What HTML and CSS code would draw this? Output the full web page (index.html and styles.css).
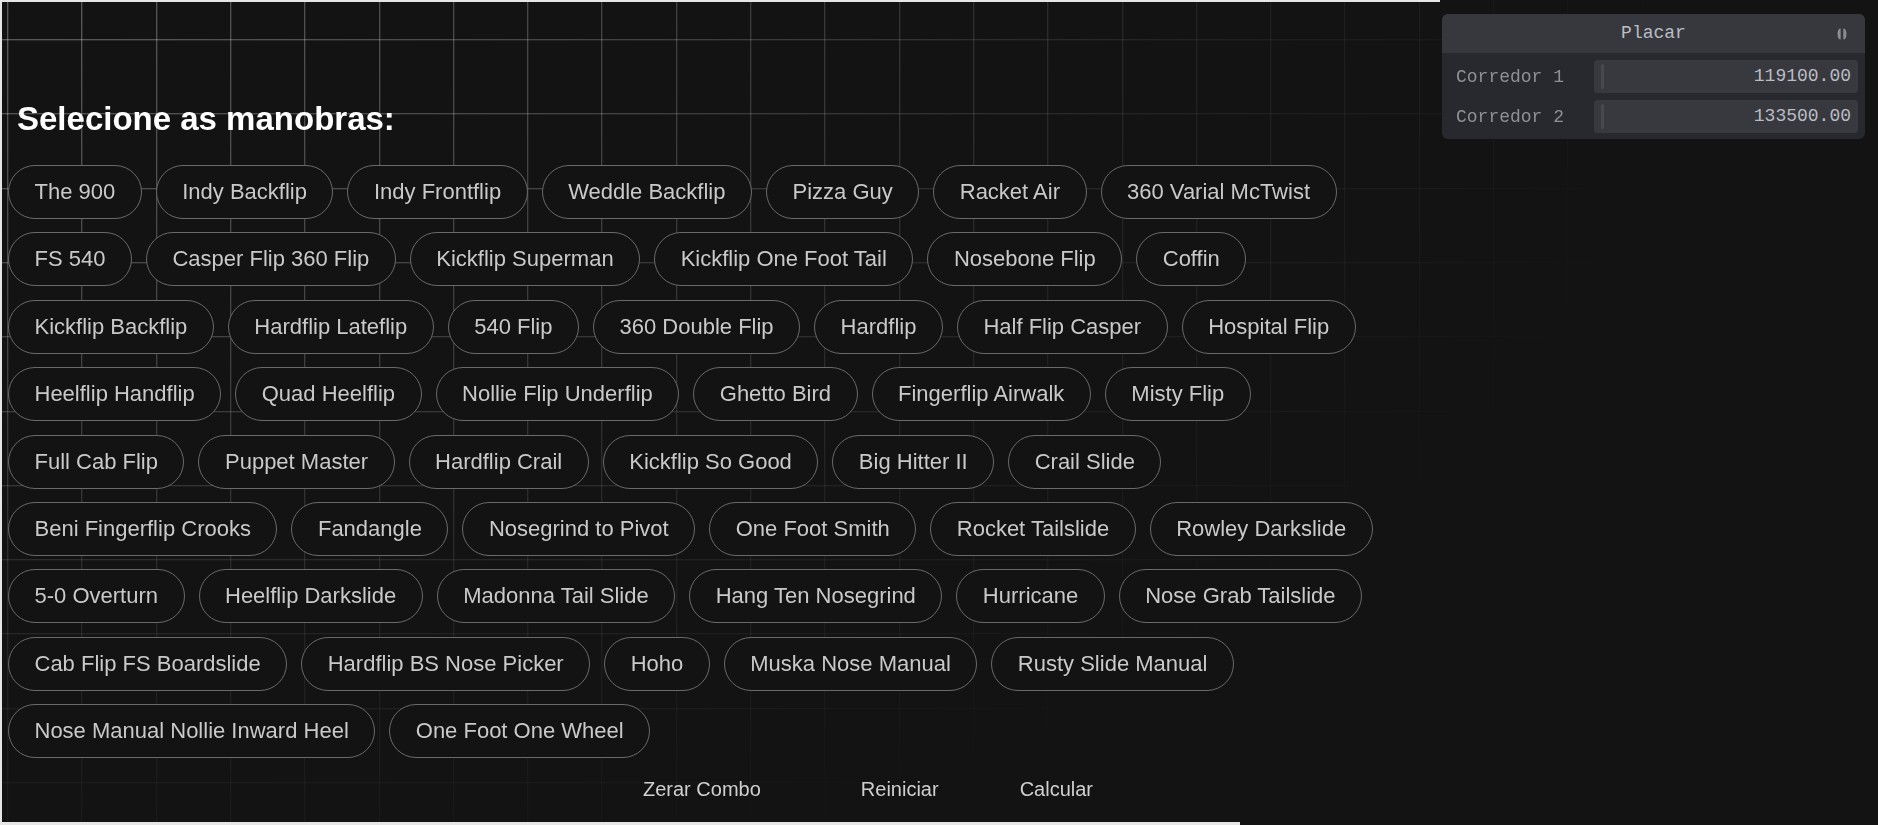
FILE: index.html
```html
<!DOCTYPE html>
<html lang="pt">
<head>
  <meta charset="UTF-8">
  <title>Manobras</title>
  <link rel="stylesheet" href="styles.css">
</head>
<body>
  <main class="stage">
    <h2 class="title">Selecione as manobras:</h2>

    <div class="tricks">
      <button class="trick">The 900</button>
      <button class="trick">Indy Backflip</button>
      <button class="trick">Indy Frontflip</button>
      <button class="trick">Weddle Backflip</button>
      <button class="trick">Pizza Guy</button>
      <button class="trick">Racket Air</button>
      <button class="trick">360 Varial McTwist</button>
      <button class="trick">FS 540</button>
      <button class="trick">Casper Flip 360 Flip</button>
      <button class="trick">Kickflip Superman</button>
      <button class="trick">Kickflip One Foot Tail</button>
      <button class="trick">Nosebone Flip</button>
      <button class="trick">Coffin</button>
      <button class="trick">Kickflip Backflip</button>
      <button class="trick">Hardflip Lateflip</button>
      <button class="trick">540 Flip</button>
      <button class="trick">360 Double Flip</button>
      <button class="trick">Hardflip</button>
      <button class="trick">Half Flip Casper</button>
      <button class="trick">Hospital Flip</button>
      <button class="trick">Heelflip Handflip</button>
      <button class="trick">Quad Heelflip</button>
      <button class="trick">Nollie Flip Underflip</button>
      <button class="trick">Ghetto Bird</button>
      <button class="trick">Fingerflip Airwalk</button>
      <button class="trick">Misty Flip</button>
      <button class="trick">Full Cab Flip</button>
      <button class="trick">Puppet Master</button>
      <button class="trick">Hardflip Crail</button>
      <button class="trick">Kickflip So Good</button>
      <button class="trick">Big Hitter II</button>
      <button class="trick">Crail Slide</button>
      <button class="trick">Beni Fingerflip Crooks</button>
      <button class="trick">Fandangle</button>
      <button class="trick">Nosegrind to Pivot</button>
      <button class="trick">One Foot Smith</button>
      <button class="trick">Rocket Tailslide</button>
      <button class="trick">Rowley Darkslide</button>
      <button class="trick">5-0 Overturn</button>
      <button class="trick">Heelflip Darkslide</button>
      <button class="trick">Madonna Tail Slide</button>
      <button class="trick">Hang Ten Nosegrind</button>
      <button class="trick">Hurricane</button>
      <button class="trick">Nose Grab Tailslide</button>
      <button class="trick">Cab Flip FS Boardslide</button>
      <button class="trick">Hardflip BS Nose Picker</button>
      <button class="trick">Hoho</button>
      <button class="trick">Muska Nose Manual</button>
      <button class="trick">Rusty Slide Manual</button>
      <button class="trick">Nose Manual Nollie Inward Heel</button>
      <button class="trick">One Foot One Wheel</button>
    </div>

    <div class="actions">
      <button class="action action-reset">Zerar Combo</button>
      <button class="action">Reiniciar</button>
      <button class="action">Calcular</button>
    </div>
  </main>

  <!-- painel do placar -->
  <div class="pane">
    <div class="pane-title">
      Placar
      <svg class="pane-mark" width="10" height="12" viewBox="0 0 10 12">
        <path d="M3.6 0.5 C1.4 0.5 0.6 3 0.6 6 C0.6 9 1.4 11.5 3.6 11.5 Z" fill="#8d8e93"/>
        <path d="M6.4 0.5 C8.6 0.5 9.4 3 9.4 6 C9.4 9 8.6 11.5 6.4 11.5 Z" fill="#8d8e93"/>
      </svg>
    </div>
    <div class="pane-body">
      <div class="pane-row">
        <span class="pane-label">Corredor 1</span>
        <span class="pane-value">119100.00</span>
      </div>
      <div class="pane-row">
        <span class="pane-label">Corredor 2</span>
        <span class="pane-value">133500.00</span>
      </div>
    </div>
  </div>
</body>
</html>
```

FILE: styles.css
```css
html, body {
  height: 100%;
}

body {
  margin: 0;
  background: #131313;
  color: #c9c9c9;
  font-family: 'Liberation Sans', Arial, sans-serif;
  font-size: 22px;
  overflow: hidden;
}

/* grade de fundo, some aos poucos */
body::before {
  content: '';
  position: fixed;
  inset: 0;
  z-index: -1;
  background-image:
    repeating-linear-gradient(to right, transparent -65.3px 7px, rgba(255,255,255,.30) 7px 8px, rgba(255,255,255,.10) 8px 9px),
    repeating-linear-gradient(to bottom, transparent -33.3px 39px, rgba(255,255,255,.30) 39px 40px, rgba(255,255,255,.10) 40px 41px);
  -webkit-mask-image: radial-gradient(ellipse 1700px 960px at 0 0, #000 0%, rgba(0,0,0,.7) 35%, rgba(0,0,0,.22) 70%, transparent 100%);
  mask-image: radial-gradient(ellipse 1700px 960px at 0 0, #000 0%, rgba(0,0,0,.7) 35%, rgba(0,0,0,.22) 70%, transparent 100%);
}

/* moldura clara nas bordas */
body::after {
  content: '';
  position: fixed;
  inset: 0;
  pointer-events: none;
  background:
    linear-gradient(#e6e6e6, #e6e6e6) 0 0 / 1440px 2px no-repeat,
    linear-gradient(#e6e6e6, #e6e6e6) 0 0 / 2px 100% no-repeat,
    linear-gradient(#e6e6e6, #e6e6e6) 0 100% / 1240px 3px no-repeat;
}

.stage {
  padding: 0 8px;
}

.title {
  margin: 0 0 27px;
  padding: 100px 0 0 9px;
  font-size: 33px;
  line-height: 38px;
  font-weight: bold;
  color: #fff;
}

.tricks {
  display: flex;
  flex-wrap: wrap;
  gap: 13.4px 14px;
  width: 1410px;
}

.trick {
  padding: 14px 25.5px;
  line-height: 24px;
  font-family: inherit;
  font-size: 22px;
  color: #c9c9c9;
  background: #131313;
  border: 1px solid #6a6a6a;
  border-radius: 30px;
}

.actions {
  display: flex;
  justify-content: center;
  gap: 41px;
  margin-top: 10px;
  padding-right: 142px;
}

.action {
  padding: 10px 20px;
  font-family: inherit;
  font-size: 20px;
  line-height: 23px;
  color: #cfcfcf;
  background: none;
  border: 0;
}

.action-reset {
  margin-right: 19px;
}

/* placar no canto */
.pane {
  position: absolute;
  top: 14px;
  right: 13px;
  width: 423px;
  background: #28292e;
  border-radius: 6px;
  font-family: 'Liberation Mono', 'Courier New', monospace;
  font-size: 18px;
  overflow: hidden;
}

.pane-title {
  position: relative;
  height: 39px;
  line-height: 39px;
  text-align: center;
  color: #bbbcc4;
  background: #37383d;
}

.pane-mark {
  position: absolute;
  right: 18px;
  top: 14px;
}

.pane-body {
  display: flex;
  flex-direction: column;
  gap: 7px;
  padding: 7px 7px 6px 14px;
}

.pane-row {
  display: flex;
  align-items: center;
  height: 33px;
}

.pane-label {
  width: 138px;
  color: #8f9096;
}

.pane-value {
  position: relative;
  flex: 1;
  height: 33px;
  line-height: 33px;
  padding-right: 7px;
  text-align: right;
  color: #bbbcc4;
  background: #38393e;
  border-radius: 3px;
}

.pane-value::before {
  content: '';
  position: absolute;
  left: 7px;
  top: 4px;
  bottom: 4px;
  width: 3px;
  border-radius: 2px;
  background: #48494e;
}
```
